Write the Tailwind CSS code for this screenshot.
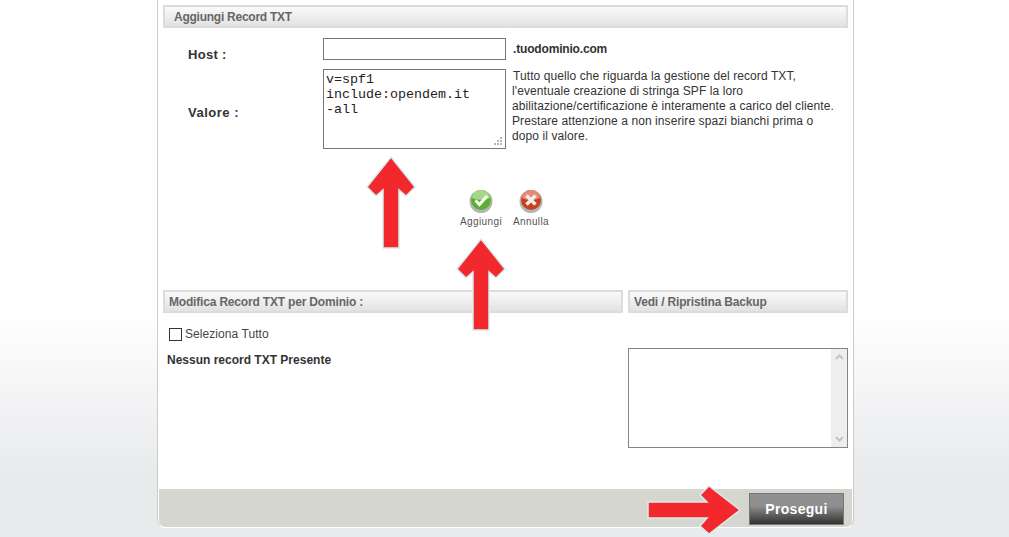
<!DOCTYPE html>
<html lang="en">
<head>
    <meta charset="UTF-8">
    <title>Aggiungi Record TXT</title>
    <script src="https://cdn.jsdelivr.net/npm/@tailwindcss/browser@4"></script>
</head>
<body class="h-[537px] w-[1009px] overflow-hidden bg-gradient-to-b from-white from-[58%] to-[#e9eaec] to-[88%] font-['Liberation_Sans',Arial,sans-serif]">
    <div class="relative ml-[157px] flex h-[528px] w-[697px] flex-col rounded-b-lg border-x border-b border-[#cccccc] border-b-white bg-white pt-[5px]">

        <!-- aggiungi record -->
        <div class="mx-[5px] flex h-[23px] items-center border-2 border-[#dcdcdc] bg-gradient-to-b from-[#fafafa] to-[#e2e2e2] pl-[9px] text-[12px] font-bold tracking-[-0.25px] text-[#666]">Aggiungi Record TXT</div>

        <div class="mt-[10px] flex pl-[30px]">
            <div class="w-[135px] pt-[9px] text-[13px] leading-[15px] font-bold tracking-[0.3px] text-[#333]">Host :</div>
            <input type="text" class="h-[22px] w-[183px] border border-[#777] bg-white">
            <div class="pt-[4px] pl-[7px] text-[12px] leading-[15px] font-bold tracking-[-0.17px] text-[#333]">.tuodominio.com</div>
        </div>

        <div class="mt-[7px] flex pl-[30px]">
            <div class="flex w-[135px] items-center pt-[8px] text-[13px] font-bold tracking-[0.5px] text-[#333]">Valore :</div>
            <div class="relative h-[80px] w-[183px]">
                <textarea class="h-full w-full resize-none border border-[#777] bg-white p-[2px] font-['Liberation_Mono',monospace] text-[13.33px] leading-[15px] text-[#222]">v=spf1
include:opendem.it
-all</textarea>
                <svg class="absolute right-[3px] bottom-[3px]" width="9" height="9" viewBox="0 0 9 9" fill="#b5b5b5">
                    <rect x="6" y="0" width="2" height="2"/><rect x="3" y="3" width="2" height="2"/><rect x="6" y="3" width="2" height="2"/>
                    <rect x="0" y="6" width="2" height="2"/><rect x="3" y="6" width="2" height="2"/><rect x="6" y="6" width="2" height="2"/>
                </svg>
            </div>
            <p class="w-[334px] pl-[6px] indent-[1px] text-[12px] leading-[15px] tracking-[0.09px] text-[#333]">Tutto quello che riguarda la gestione del record TXT, l'eventuale creazione di stringa SPF la loro abilitazione/certificazione è interamente a carico del cliente. Prestare attenzione a non inserire spazi bianchi prima o dopo il valore.</p>
        </div>

        <!-- bottoni -->
        <div class="mt-[40px] ml-[301px] flex gap-[9px]">
            <button class="flex w-[44px] flex-col items-center text-[10px] leading-[12px] tracking-[0.4px] text-[#555]">
                <svg width="24" height="24" viewBox="0 0 24 24" class="mb-[3px]">
                    <circle cx="12" cy="12.5" r="11.5" fill="#b5b5b5"/>
                    <circle cx="12" cy="11" r="10" fill="#5cb030"/>
                    <path d="M3 9a9 8 0 0 1 18 0a14 8 0 0 1-18 0z" fill="#a5d98a"/>
                    <path d="M6.500 11.500l4 4l7.500-8.500" fill="none" stroke="#fff" stroke-width="3"/>
                </svg>
                Aggiungi
            </button>
            <button class="flex w-[38px] flex-col items-center text-[10px] leading-[12px] tracking-[0.4px] text-[#555]">
                <svg width="24" height="24" viewBox="0 0 24 24" class="mb-[3px]">
                    <circle cx="12" cy="12.5" r="11.5" fill="#b5b5b5"/>
                    <circle cx="12" cy="11" r="10" fill="#c9401f"/>
                    <path d="M3 9a9 8 0 0 1 18 0a14 8 0 0 1-18 0z" fill="#e58c78"/>
                    <path d="M7.500 6.500l9 9M16.500 6.500l-9 9" fill="none" stroke="#f4ecea" stroke-width="3.500"/>
                </svg>
                Annulla
            </button>
        </div>

        <!-- modifica / backup -->
        <div class="mt-[62px] flex gap-[5px] px-[5px]">
            <div class="w-[460px]">
                <div class="flex h-[23px] items-center border-2 border-[#dcdcdc] bg-gradient-to-b from-[#fafafa] to-[#e2e2e2] pl-[4px] text-[12px] font-bold tracking-[-0.18px] text-[#666]">Modifica Record TXT per Dominio :</div>
                <label class="mt-[14px] ml-[6px] flex items-center gap-[3px] text-[12px] leading-[14px] tracking-[0.07px] text-[#444]">
                    <span class="h-[13px] w-[13px] border border-[#333] bg-white"></span>
                    Seleziona Tutto
                </label>
                <div class="mt-[12px] ml-[4px] text-[12px] leading-[14px] font-bold text-[#333]">Nessun record TXT Presente</div>
            </div>
            <div class="w-[220px]">
                <div class="flex h-[23px] items-center border-2 border-[#dcdcdc] bg-gradient-to-b from-[#fafafa] to-[#e2e2e2] pl-[4px] text-[12px] font-bold tracking-[-0.17px] text-[#666]">Vedi / Ripristina Backup</div>
                <div class="mt-[35px] flex h-[100px] justify-end border border-[#80848c] bg-white">
                    <div class="flex w-[16px] flex-col items-center justify-between bg-[#eeeeee] py-[5px]">
                        <svg width="9" height="6" viewBox="0 0 9 6"><path d="M1 5l3.500-3.500l3.500 3.500" fill="none" stroke="#c4c4c4" stroke-width="2"/></svg>
                        <svg width="9" height="6" viewBox="0 0 9 6"><path d="M1 1l3.500 3.500l3.500-3.500" fill="none" stroke="#c4c4c4" stroke-width="2"/></svg>
                    </div>
                </div>
            </div>
        </div>

        <!-- footer -->
        <div class="mx-[1px] mt-auto flex h-[38px] items-start justify-end rounded-b-md bg-[#d6d6d0] pt-[4px] pr-[8px]">
            <button class="h-[32px] w-[95px] border border-[#777] bg-gradient-to-b from-[#8f8f8f] from-[40%] to-[#333] text-[14px] font-bold tracking-[0.3px] text-white">Prosegui</button>
        </div>

        <!-- frecce sopra il contenuto -->
        <svg class="absolute top-[155px] left-[207px]" width="52" height="96" viewBox="0 0 52 96">
            <path d="M26 2L50 32L41 41L34 35V93H18V35L11 41L2 32z" fill="#f2282c" stroke="#d8ecec" stroke-width="1.500"/>
        </svg>
        <svg class="absolute top-[237px] left-[297px]" width="52" height="96" viewBox="0 0 52 96">
            <path d="M26 2L50 32L41 41L34 35V93H18V35L11 41L2 32z" fill="#f2282c" stroke="#d8ecec" stroke-width="1.500"/>
        </svg>
        <svg class="absolute top-[484px] left-[488px]" width="96" height="52" viewBox="0 0 96 52">
            <path d="M94 26L63 2L54 11L61 18H2V34H61L54 42L63 50z" fill="#f2282c" stroke="#d8ecec" stroke-width="1.500"/>
        </svg>
    </div>
</body>
</html>
